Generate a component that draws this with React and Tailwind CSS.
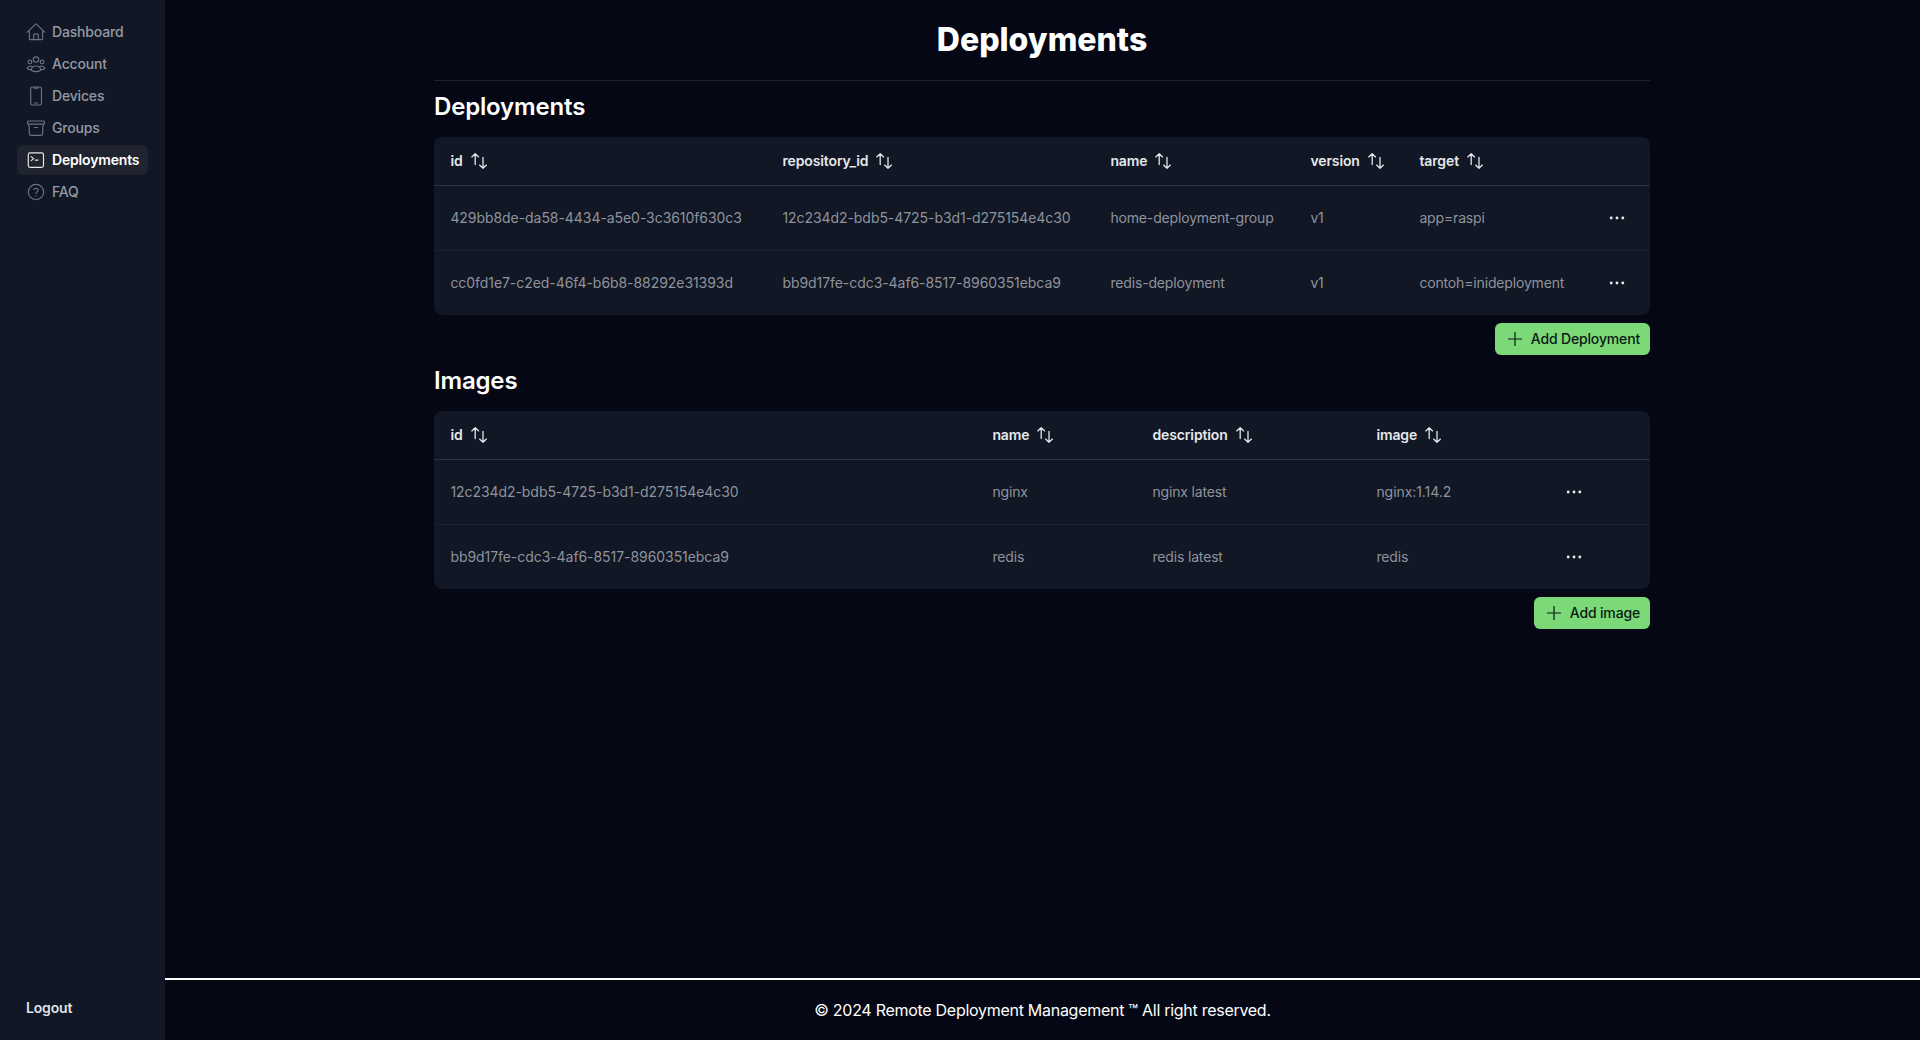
const navItems = [
  {
    label: "Dashboard",
    icon: (
      <>
        <path d="M1.3 10.2 9.3 2.3a1 1 0 0 1 1.4 0l8 7.9" />
        <path d="M3.4 8.4v8.4c0 .5.4.9.9.9h11.4c.5 0 .9-.4.9-.9V8.4" />
        <path d="M7.7 17.6v-4.7c0-.5.4-.8.8-.8h3c.4 0 .8.3.8.8v4.7" />
      </>
    ),
  },
  {
    label: "Account",
    icon: (
      <>
        <circle cx="10" cy="5.5" r="2.7" />
        <circle cx="4" cy="7.9" r="1.8" />
        <circle cx="16" cy="7.9" r="1.8" />
        <path d="M5.2 16.2a4.85 4.85 0 0 1 9.6 0c-2.9 1.8-6.7 1.8-9.6 0Z" />
        <path d="M5.1 15.6c-1.4.1-2.6-.2-3.8-.8a2.9 2.9 0 0 1 4.9-2M14.9 15.6c1.4.1 2.6-.2 3.8-.8a2.9 2.9 0 0 0-4.9-2" />
      </>
    ),
  },
  {
    label: "Devices",
    icon: (
      <>
        <rect x="4.7" y="1" width="10.8" height="18" rx="1.7" />
        <path d="M8 1.2v.9h4v-.9M8.3 17h3.4" />
      </>
    ),
  },
  {
    label: "Groups",
    icon: (
      <>
        <rect x="1.6" y="3" width="16.8" height="3.1" rx=".8" />
        <path d="m2.9 6.3.6 9.8c0 .8.7 1.3 1.4 1.3h10.2c.7 0 1.4-.5 1.4-1.3l.6-9.8M8.3 9.5h3.4" />
      </>
    ),
  },
  {
    label: "Deployments",
    active: true,
    icon: (
      <>
        <rect x="2.3" y="2.9" width="15.2" height="14.4" rx="1.8" />
        <path d="m5.1 6.6 2.6 2-2.6 2M9.2 10.1h2.8" />
      </>
    ),
  },
  {
    label: "FAQ",
    icon: (
      <>
        <circle cx="10" cy="10" r="7.7" />
        <path d="M7.9 7.6c.9-1.9 4.3-1.5 4.3.7 0 1.6-2.2 1.6-2.2 3.2M10 13.8v.2" />
      </>
    ),
  },
];

const deployments = {
  columns: [
    { key: "id", width: "w-[332px]" },
    { key: "repository_id", width: "w-[328px]" },
    { key: "name", width: "w-[200px]" },
    { key: "version", width: "w-[109px]" },
    { key: "target", width: "w-[182px]" },
  ],
  rows: [
    ["429bb8de-da58-4434-a5e0-3c3610f630c3", "12c234d2-bdb5-4725-b3d1-d275154e4c30", "home-deployment-group", "v1", "app=raspi"],
    ["cc0fd1e7-c2ed-46f4-b6b8-88292e31393d", "bb9d17fe-cdc3-4af6-8517-8960351ebca9", "redis-deployment", "v1", "contoh=inideployment"],
  ],
};

const images = {
  columns: [
    { key: "id", width: "w-[542px]" },
    { key: "name", width: "w-[160px]" },
    { key: "description", width: "w-[224px]" },
    { key: "image", width: "w-[182px]" },
  ],
  rows: [
    ["12c234d2-bdb5-4725-b3d1-d275154e4c30", "nginx", "nginx latest", "nginx:1.14.2"],
    ["bb9d17fe-cdc3-4af6-8517-8960351ebca9", "redis", "redis latest", "redis"],
  ],
};

function SortIcon() {
  return (
    <svg className="ml-2 size-4 shrink-0" viewBox="0 0 16 16" fill="none" stroke="currentColor" strokeWidth="1.3" strokeLinecap="round" strokeLinejoin="round">
      <path d="M4.2 11.6V1M.8 3.9 4.2.8l3.4 3.1M12 4.4V15M8.6 12.1l3.4 3.1 3.4-3.1" />
    </svg>
  );
}

function MoreIcon() {
  return (
    <svg className="size-4" viewBox="0 0 16 16" fill="currentColor">
      <circle cx="2.2" cy="8" r="1.45" />
      <circle cx="8" cy="8" r="1.45" />
      <circle cx="13.8" cy="8" r="1.45" />
    </svg>
  );
}

function PlusIcon() {
  return (
    <svg className="size-4" viewBox="0 0 16 16" fill="none" stroke="currentColor" strokeWidth="1.2">
      <path d="M8 1v14M1 8h14" />
    </svg>
  );
}

function DataTable({ columns, rows }) {
  return (
    <div className="overflow-hidden rounded-lg bg-[#111724]">
      <table className="w-full table-fixed border-separate border-spacing-0 text-left text-sm">
        <thead>
          <tr className="h-[49px] text-[#e5e7eb]">
            {columns.map(({ key, width }) => (
              <th key={key} className={`${width} border-b border-[#2d333e] pr-4 pl-[16.4px] py-0 font-semibold tracking-[-0.12px]`}>
                <span className="flex items-center">{key}<SortIcon /></span>
              </th>
            ))}
            <th className="border-b border-[#2d333e]" />
          </tr>
        </thead>
        <tbody>
          {rows.map((row, i) => {
            const line = i < rows.length - 1 ? "h-[65px] border-b border-[#1d232e]" : "h-16";
            return (
              <tr key={row[0]}>
                {row.map((cell, j) => (
                  <td
                    key={j}
                    className={`${line} pr-4 pl-[16.4px] py-0 whitespace-nowrap text-[#8f939d] ${/\d.*\d/.test(cell) ? "tracking-[-0.06px]" : "tracking-[-0.16px]"}`}
                  >
                    {cell}
                  </td>
                ))}
                <td className={`${line} px-4 py-0 text-[#e5e7eb]`}>
                  <button className="flex size-8 items-center justify-center"><MoreIcon /></button>
                </td>
              </tr>
            );
          })}
        </tbody>
      </table>
    </div>
  );
}

function AddButton({ children }) {
  return (
    <div className="mt-2 flex justify-end">
      <button className="flex h-8 items-center gap-2 rounded-md bg-[#7bd978] pr-[10px] pl-3 text-sm font-medium tracking-[-0.16px] text-[#0b1a14]">
        <PlusIcon />
        {children}
      </button>
    </div>
  );
}

function SectionTitle({ children }) {
  return <h2 className="pt-2.5 pb-3.5 text-2xl leading-8 font-semibold tracking-[-0.17px]">{children}</h2>;
}

export default function App() {
  return (
    <div className="flex h-screen bg-[#050814] font-['Inter',sans-serif] text-white">
      <aside className="flex w-[165px] shrink-0 flex-col justify-between bg-[#111724] px-[17px] pt-[17px] pb-[22px]">
        <nav className="flex flex-col gap-0.5">
          {navItems.map(({ label, icon, active }) => (
            <a
              key={label}
              className={`flex h-[30px] items-center gap-1.5 rounded-md pl-[9px] text-sm tracking-[-0.17px] ${active ? "bg-[#1f242e] font-semibold text-white" : "font-medium text-[#9599a5]"}`}
            >
              <svg
                className={`size-5 shrink-0 ${active ? "opacity-90" : "opacity-70"}`}
                viewBox="0 0 20 20"
                fill="none"
                stroke="currentColor"
                strokeWidth="1.15"
                strokeLinecap="round"
                strokeLinejoin="round"
              >
                {icon}
              </svg>
              {label}
            </a>
          ))}
        </nav>
        <button className="px-[9px] text-left text-sm font-semibold tracking-[-0.17px] text-[#dfe3ea]">Logout</button>
      </aside>

      <div className="flex min-w-0 flex-1 flex-col">
        <main className="ml-[269px] w-[1216px] flex-1">
          <h1 className="flex h-20 items-center justify-center text-[32px] font-extrabold">Deployments</h1>
          <hr className="border-[#1d222d]" />
          <section>
            <SectionTitle>Deployments</SectionTitle>
            <DataTable {...deployments} />
            <AddButton>Add Deployment</AddButton>
          </section>
          <section>
            <SectionTitle>Images</SectionTitle>
            <DataTable {...images} />
            <AddButton>Add image</AddButton>
          </section>
        </main>
        <footer className="flex h-[62px] items-center justify-center border-t-2 border-white tracking-[-0.28px]">
          © 2024 Remote Deployment Management ™ All right reserved.
        </footer>
      </div>
    </div>
  );
}
